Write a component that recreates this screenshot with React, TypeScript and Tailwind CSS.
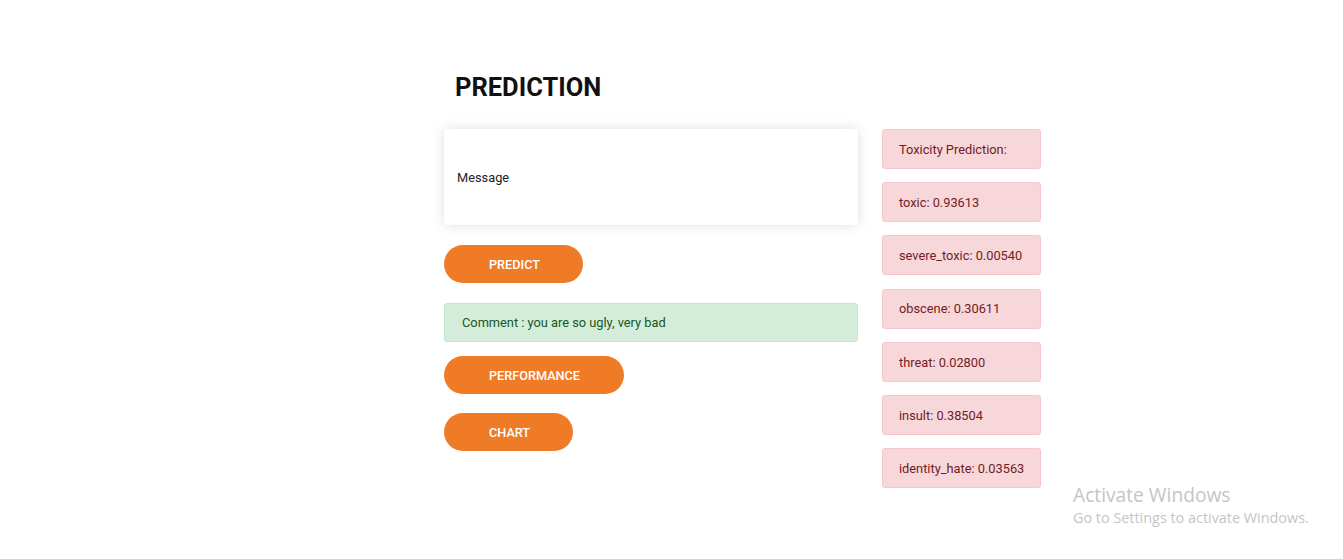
import React from "react";

const preds = [
  "Toxicity Prediction:",
  "toxic: 0.93613",
  "severe_toxic: 0.00540",
  "obscene: 0.30611",
  "threat: 0.02800",
  "insult: 0.38504",
  "identity_hate: 0.03563",
];

function Btn({ label, w }: { label: string; w: string }) {
  return (
    <button
      className={`h-[38px] ${w} rounded-full bg-[#ef7b27] text-white text-[12.7px] font-medium text-left pl-[45px] pt-[2px] uppercase`}
    >
      {label}
    </button>
  );
}

export default function App() {
  return (
    <div
      className="relative w-[1343px] h-[559px] bg-white overflow-hidden"
      style={{ fontFamily: "Roboto, 'Liberation Sans', sans-serif" }}
    >
      <div className="pl-[444px] pt-[70px]">
        <h1 className="pl-[11px] text-[25.5px] font-bold text-[#111] leading-[34px] h-[59px]">
          PREDICTION
        </h1>
        <div className="flex gap-[24px]">
          <div className="w-[414px] flex flex-col">
            <div className="h-[96px] bg-white shadow-[0_0_12px_rgba(0,0,0,0.13)] flex items-center pl-[13px] pt-[2px] text-[12.8px] text-[#222]">
              Message
            </div>
            <div className="mt-[20px]">
              <Btn label="PREDICT" w="w-[139px]" />
            </div>
            <div className="mt-[20px] h-[39px] bg-[#d4edda] border border-[#c3e6cb] rounded-[3px] flex items-center pl-[17px] text-[12.8px] text-[#155724]">
              Comment : you are so ugly, very bad
            </div>
            <div className="mt-[14px]">
              <Btn label="PERFORMANCE" w="w-[180px]" />
            </div>
            <div className="mt-[19px]">
              <Btn label="CHART" w="w-[129px]" />
            </div>
          </div>
          <div className="w-[159px] flex flex-col gap-[13.2px]">
            {preds.map((p) => (
              <div
                key={p}
                className="h-[40px] bg-[#f8d7da] border border-[#f5c6cb] rounded-[3px] flex items-center pl-[16px] pt-[1px] text-[12.8px] text-[#721c24] whitespace-nowrap"
              >
                {p}
              </div>
            ))}
          </div>
        </div>
      </div>
      <div
        className="absolute left-[1073px] top-[483px] text-[#c5c5c5]"
        style={{ fontFamily: "'Open Sans', 'Noto Sans', sans-serif" }}
      >
        <div className="text-[19.2px] leading-[24px]">Activate Windows</div>
        <div className="text-[14.4px] leading-[22px]">Go to Settings to activate Windows.</div>
      </div>
    </div>
  );
}
